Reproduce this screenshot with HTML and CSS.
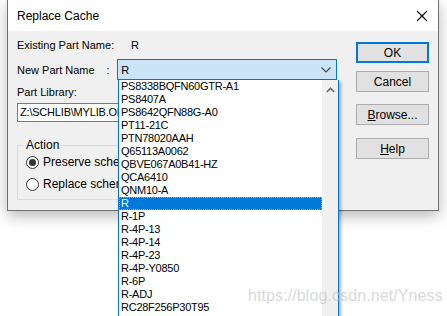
FILE: index.html
```html
<!DOCTYPE html>
<html lang="en">
<head>
    <meta charset="UTF-8">
    <meta name="viewport" content="width=device-width, initial-scale=1.0">
    <title>Replace Cache</title>
    <link rel="stylesheet" href="styles.css">
</head>
<body>

<div class="screen">
    <!-- Replace Cache dialog -->
    <div class="dialog">
        <div class="titlebar">
            <span class="title">Replace Cache</span>
            <svg class="close" width="12" height="12" viewBox="0 0 12 12">
                <path d="M1 1 L11 11 M11 1 L1 11" stroke="#000" stroke-width="1.1" fill="none"/>
            </svg>
        </div>
        <div class="dialog-body">
            <div class="form">
                <div class="row row-existing">
                    <span class="label label-wide">Existing Part Name:</span>
                    <span class="value">R</span>
                </div>
                <div class="row row-new">
                    <span class="label label-new">New Part Name</span>
                    <span class="colon">:</span>
                    <div class="combo">
                        <span>R</span>
                        <svg class="combo-arrow" width="10" height="6" viewBox="0 0 10 6">
                            <path d="M0.5 0.5 L5 5 L9.5 0.5" stroke="#444" stroke-width="1.1" fill="none"/>
                        </svg>
                    </div>
                </div>
                <div class="label label-lib">Part Library:</div>
                <div class="field"><span class="clip field-text">Z:\SCHLIB\MYLIB.OLB</span></div>
                <fieldset class="group">
                    <legend>Action</legend>
                    <div class="radio-row">
                        <span class="radio checked"></span>
                        <span class="clip radio-text">Preserve schematic part properties</span>
                    </div>
                    <div class="radio-row">
                        <span class="radio"></span>
                        <span class="clip radio-text">Replace schematic part properties</span>
                    </div>
                </fieldset>
            </div>
            <div class="buttons">
                <button class="btn btn-default">OK</button>
                <button class="btn btn-cancel">Cancel</button>
                <button class="btn btn-browse"><u>B</u>rowse...</button>
                <button class="btn btn-help"><u>H</u>elp</button>
            </div>
        </div>
    </div>

    <!-- opened combo list -->
    <div class="dropdown">
        <ul class="options">
            <li>PS8338BQFN60GTR-A1</li>
            <li>PS8407A</li>
            <li>PS8642QFN88G-A0</li>
            <li>PT11-21C</li>
            <li>PTN78020AAH</li>
            <li>Q65113A0062</li>
            <li>QBVE067A0B41-HZ</li>
            <li>QCA6410</li>
            <li>QNM10-A</li>
            <li class="selected">R</li>
            <li>R-1P</li>
            <li>R-4P-13</li>
            <li>R-4P-14</li>
            <li>R-4P-23</li>
            <li>R-4P-Y0850</li>
            <li>R-6P</li>
            <li>R-ADJ</li>
            <li>RC28F256P30T95</li>
        </ul>
        <div class="scrollbar">
            <svg width="9" height="6" viewBox="0 0 9 6">
                <path d="M0.8 5 L4.5 1.3 L8.2 5" stroke="#606060" stroke-width="1.6" fill="none"/>
            </svg>
        </div>
    </div>

    <div class="watermark">https://blog.csdn.net/Yness</div>
</div>

</body>
</html>
```

FILE: styles.css
```css
body {
    margin: 0;
    background-color: #ffffff;
    font-family: "Liberation Sans", Arial, sans-serif;
    font-size: 11px;
    color: #000000;
}

.screen {
    position: relative;
    width: 447px;
    height: 316px;
    overflow: hidden;
    padding-left: 7px;
    box-sizing: border-box;
}

/* dialog window */
.dialog {
    width: 432px;
    height: 212px;
    margin-top: -1px;
    border: 1px solid #707070;
    background-color: #f0f0f0;
    box-sizing: border-box;
    box-shadow: 0 5px 14px rgba(0,0,0,0.28);
}

.titlebar {
    height: 31px;
    background-color: #ffffff;
    display: flex;
    align-items: center;
    justify-content: space-between;
    padding: 0 10px 0 9px;
}

.title {
    font-size: 12px;
}

.dialog-body {
    display: flex;
    padding: 0 0 0 9px;
}

.form {
    width: 320px;
    padding-top: 6px;
}

.row {
    display: flex;
    align-items: center;
}

.row-existing {
    height: 16px;
}

.label-wide {
    width: 114px;
}

.row-new {
    margin-top: 6px;
}

.label-new {
    width: 90px;
}

.colon {
    width: 11px;
}

.combo {
    width: 221px;
    height: 21px;
    box-sizing: border-box;
    border: 1px solid #0078d7;
    background-color: #cce4f7;
    display: flex;
    align-items: center;
    justify-content: space-between;
    padding: 1px 5px 0 3px;
}

.label-lib {
    margin-top: 4px;
    line-height: 16px;
}

.field {
    margin-top: 3px;
    height: 19px;
    box-sizing: border-box;
    border: 1px solid #7a7a7a;
    background-color: #ffffff;
    padding: 2px 2px 0 2px;
    letter-spacing: -0.2px;
}

/* text that runs under the open list is cut where the list begins */
.clip {
    display: inline-block;
    white-space: nowrap;
    overflow: hidden;
    vertical-align: top;
}

.field-text {
    max-width: 98px;
}

.radio-text {
    max-width: 76px;
}

.group {
    margin: 15px 0 0 0;
    padding: 2px 8px 6px 8px;
    border: 1px solid #dcdcdc;
    height: 63px;
    box-sizing: border-box;
}

.group legend {
    padding: 0 2px;
    margin-left: -2px;
    line-height: 16px;
    font-size: 12px;
}

.radio-row {
    display: flex;
    align-items: center;
    height: 14px;
    gap: 4px;
    font-size: 12px;
}

.radio-row + .radio-row {
    margin-top: 8px;
}

.radio {
    width: 13px;
    height: 13px;
    box-sizing: border-box;
    border: 1px solid #333333;
    border-radius: 50%;
    background-color: #ffffff;
    display: flex;
    align-items: center;
    justify-content: center;
    flex-shrink: 0;
}

.radio.checked::after {
    content: "";
    width: 7px;
    height: 7px;
    border-radius: 50%;
    background-color: #333333;
}

/* right button column */
.buttons {
    display: flex;
    flex-direction: column;
    margin-left: 19px;
    padding-top: 11px;
}

.btn {
    width: 73px;
    height: 21px;
    border: 1px solid #adadad;
    background-color: #e1e1e1;
    font-family: inherit;
    font-size: 12px;
    padding: 0;
    color: #000000;
}

.btn-default {
    border: 2px solid #0078d7;
}

.btn-cancel {
    margin-top: 8px;
}

.btn-browse {
    margin-top: 12px;
}

.btn-help {
    margin-top: 13px;
}

/* open list of the combo box */
.dropdown {
    position: absolute;
    left: 118px;
    top: 80px;
    width: 221px;
    height: 250px;
    box-sizing: border-box;
    border: 1px solid #0078d7;
    border-top: none;
    background-color: #ffffff;
    display: flex;
    box-shadow: 2px 2px 3px rgba(0,0,0,0.3);
}

.options {
    list-style: none;
    margin: 0;
    padding: 0;
    flex: 1;
    letter-spacing: -0.25px;
}

.options li {
    height: 13px;
    line-height: 13px;
    padding-left: 2px;
    white-space: nowrap;
}

.options li.selected {
    background-color: #0078d7;
    color: #ffffff;
    outline: 1px dotted #f39a3c;
    outline-offset: -1px;
}

.scrollbar {
    width: 16px;
    background-color: #f0f0f0;
    display: flex;
    justify-content: center;
    padding-top: 7px;
    box-sizing: border-box;
}

.watermark {
    position: absolute;
    left: 248px;
    top: 287px;
    font-size: 16px;
    color: rgba(190,190,190,0.6);
    letter-spacing: 0.1px;
}
```
